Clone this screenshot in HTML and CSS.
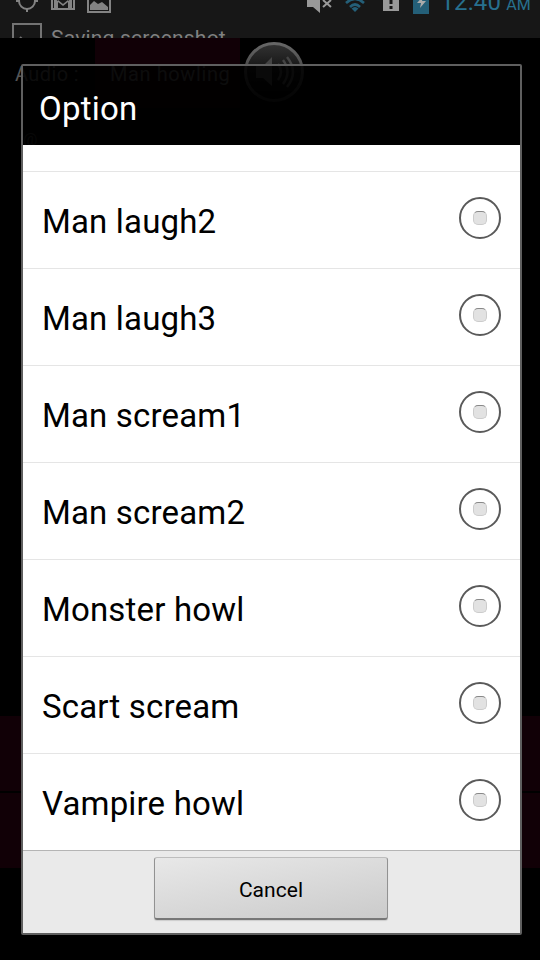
FILE: index.html
```html
<!DOCTYPE html>
<html lang="en">
<head>
<meta charset="utf-8">
<title>Option</title>
<link rel="stylesheet" href="styles.css">
</head>
<body>
<main class="screen">
  <header class="status">
    <svg class="status-icons" width="540" height="38" viewBox="0 0 540 38">
      <g fill="none" stroke="#838383" stroke-width="2">
        <circle cx="27" cy="1" r="8"/>
        <path d="M27 9v3M16 1h4M34 1h4"/>
        <path d="M52 -7h22v16h-22z"/>
        <path d="M88 -7h22v19h-22z"/>
        <path d="M13 40V24h28v16M20 37l4 4" stroke="#737373"/>
      </g>
      <path d="M54 -2l4 3v8h-4zM72 -2l-4 3v8h4zM58 0l5 4 5-4v2l-5 4-5-4z" fill="#838383"/>
      <path d="M90 10V5l4-4 4 3 4-2 6 5v3z" fill="#838383"/>
      <path d="M307 -2h6l7-7v22l-7-6h-6z" fill="#999"/>
      <path d="M323 0l8 7M331 0l-8 7" stroke="#999" stroke-width="2"/>
      <g fill="none" stroke="#245f78" stroke-width="2.6">
        <path d="M346 3q9-8 18 0M350 7q5-5 10 0"/>
      </g>
      <path d="M351.500 8.500q3.500-3 7 0L355 12z" fill="#245f78"/>
      <path d="M383 -6h16v17h-16z" fill="#999"/>
      <path d="M389.500 -3h3v7h-3zM389.500 6h3v3h-3z" fill="#171717"/>
      <path d="M413 -8h16v22h-16z" fill="#245f78"/>
      <path d="M424 -5l-7 8h4l-1 5 6-7h-4z" fill="#aaa"/>
    </svg>
    <div class="clock">12:40<span class="ampm">AM</span></div>
    <div class="ticker">Saving screenshot</div>
  </header>

  <section class="app">
    <div class="audio">
      <span class="audio-label">Audio :</span>
      <span class="audio-value">Man howling</span>
      <svg class="speaker" width="64" height="64" viewBox="0 0 64 64">
        <defs>
          <linearGradient id="rim" x1="0" y1="0" x2="0" y2="1">
            <stop offset="0" stop-color="#666"/><stop offset="1" stop-color="#222"/>
          </linearGradient>
          <linearGradient id="face" x1="0" y1="0" x2="0" y2="1">
            <stop offset="0" stop-color="#333"/><stop offset=".4" stop-color="#181818"/><stop offset="1" stop-color="#000"/>
          </linearGradient>
        </defs>
        <circle cx="32" cy="32" r="28.500" fill="url(#face)" stroke="url(#rim)" stroke-width="3"/>
        <path d="M14 26h7l9-9v29l-9-8h-7z" fill="#444"/>
        <path d="M36 24q6 8 0 16M41 20q9 12 0 24M45 17q12 15 0 30" fill="none" stroke="#444" stroke-width="2.500"/>
      </svg>
    </div>
    <div class="count">@</div>
    <div class="bands"><div class="band"></div><div class="band"></div></div>
  </section>

  <section class="dialog">
    <h1 class="title">Option</h1>
    <ul class="list">
      <li class="row partial"></li>
      <li class="row"><span class="name">Man laugh2</span><span class="radio"></span></li>
      <li class="row"><span class="name">Man laugh3</span><span class="radio"></span></li>
      <li class="row"><span class="name">Man scream1</span><span class="radio"></span></li>
      <li class="row"><span class="name">Man scream2</span><span class="radio"></span></li>
      <li class="row"><span class="name">Monster howl</span><span class="radio"></span></li>
      <li class="row"><span class="name">Scart scream</span><span class="radio"></span></li>
      <li class="row"><span class="name">Vampire howl</span><span class="radio"></span></li>
    </ul>
    <footer class="footer"><button class="cancel" type="button">Cancel</button></footer>
  </section>
</main>
</body>
</html>
```
FILE: styles.css
```css
*, *::after { box-sizing: border-box; }
body { margin: 0; background: #000; font-family: Roboto, "Liberation Sans", sans-serif; }
.screen { position: relative; width: 540px; height: 960px; overflow: hidden; background: #000; }
.status { position: relative; height: 38px; overflow: hidden; background: #171717; }
.status-icons { display: block; }
.clock { position: absolute; right: 9px; top: -16px; font-size: 24px; line-height: 36px; color: #27708e; white-space: nowrap; letter-spacing: .2px; }
.ampm { margin-left: 5px; font-size: 16px; letter-spacing: .2px; }
.ticker { position: absolute; left: 51px; top: 25px; font-size: 21px; line-height: 26px; letter-spacing: .2px; color: #808080; white-space: nowrap; }
.app { height: 922px; display: flex; flex-direction: column; }
.audio { display: flex; height: 70px; font-size: 20px; line-height: 72px; color: #555; }
.audio-label { width: 95px; padding-left: 15px; letter-spacing: .4px; }
.audio-value { width: 145px; padding-left: 15px; background: #110006; letter-spacing: .6px; white-space: nowrap; }
.speaker { margin: 2px 0 0 2px; }
.count { height: 40px; margin: 20px 0 0 23px; font-size: 16px; line-height: 24px; color: #333; }
.bands { margin-top: 548px; }
.band { height: 75px; margin-bottom: 2px; background: #110006; }
.dialog { position: absolute; left: 21px; top: 64px; width: 501px; height: 871px; display: flex; flex-direction: column; border: 2px solid #5f5f5f; border-radius: 2px; background: rgba(0, 0, 0, .85); }
.title { flex: none; height: 79px; margin: 0; padding-left: 16px; font-size: 33px; font-weight: 400; line-height: 86px; letter-spacing: .25px; color: #fff; }
.list { flex: none; margin: 0; padding: 0; list-style: none; background: #fff; }
.row { display: flex; height: 97px; align-items: center; justify-content: space-between; padding: 0 19px 0 19px; border-bottom: 1px solid #e5e5e5; }
.row.partial { height: 27px; }
.row:last-child { border-bottom-color: #b5b5b5; }
.name { margin-top: 4px; font-size: 33px; line-height: 40px; letter-spacing: .17px; color: #000; }
.radio { display: flex; width: 42px; height: 42px; margin-top: -5px; align-items: center; justify-content: center; border: 2px solid #5a5a5a; border-radius: 50%; }
.radio::after { content: ""; width: 14px; height: 14px; border: 1px solid #ccc; border-top-color: #888; border-radius: 5px; background: #e2e2e2; }
.footer { flex: 1; display: flex; justify-content: center; align-items: flex-start; padding: 6px 0 0; background: #eaeaea; }
.cancel { width: 234px; height: 63px; margin-left: -1px; padding: 3px 0 0; border: 1px solid #929292; border-top-color: #bdbdbd; border-bottom: 2px solid #777; border-radius: 3px; background: linear-gradient(170deg, #e8e8e8, #cbcbcb); box-shadow: 0 1px 1px #ccc; font: 400 21px Roboto, sans-serif; letter-spacing: .05px; color: #000; }
```
